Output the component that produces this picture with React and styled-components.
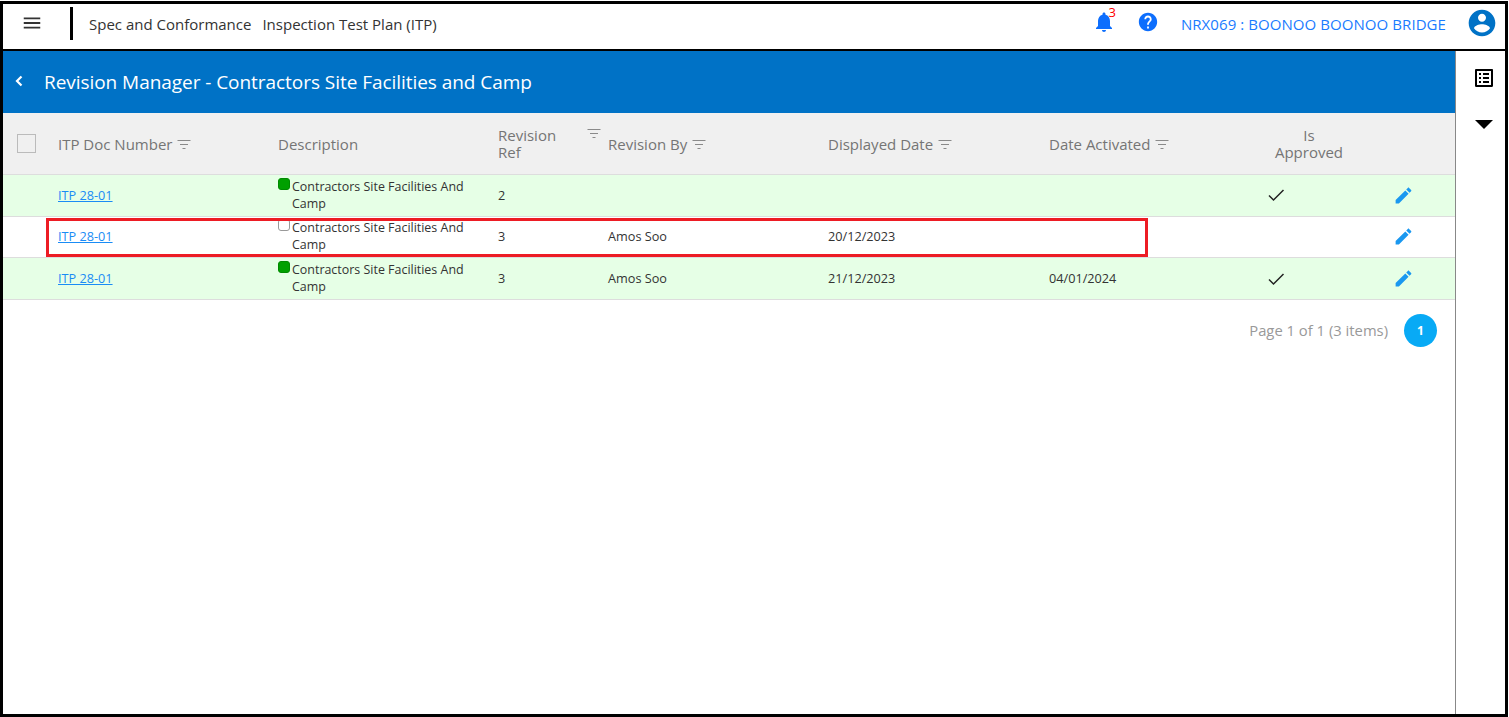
import React from 'react'
import styled, { createGlobalStyle } from 'styled-components'

const GlobalStyle = createGlobalStyle`
  html, body {
    margin: 0;
    padding: 0;
    background: #fff;
  }
  body {
    font-family: "Open Sans", "Noto Sans", sans-serif;
  }
`;

const Frame = styled.div`
  box-sizing: border-box;
  width: 1508px;
  height: 716px;
  margin-top: 1px;
  border: 3px solid #000;
  display: flex;
  flex-direction: column;
  overflow: hidden;
`;

const TopBar = styled.header`
  box-sizing: border-box;
  height: 47px;
  flex: none;
  display: flex;
  align-items: center;
  border-bottom: 2px solid #000;
  padding: 0 0 6px 18px;
`;

const MenuButton = styled.div`
  display: flex;
  width: 23px;
  margin-bottom: 2px;
  color: #333;
`;

const Divider = styled.div`
  width: 3px;
  height: 33px;
  background: #000;
  margin: 0 16px 0 26px;
`;

const Crumb = styled.span`
  font-size: 15px;
  color: #333;
  margin-right: 11px;
  white-space: nowrap;
`;

const TopActions = styled.div`
  margin-left: auto;
  display: flex;
  align-items: center;
  color: #0d6efd;
  padding-right: 7px;
`;

const Bell = styled.div`
  position: relative;
  display: flex;
  margin: 0 21px 3px 0;
`;

const BellCount = styled.span`
  position: absolute;
  top: -5px;
  right: 0;
  font-size: 13px;
  line-height: 14px;
  color: #f00;
`;

const HelpIcon = styled.div`
  display: flex;
  margin: 0 22px 3px 0;
`;

const Project = styled.span`
  font-size: 15px;
  letter-spacing: 0.07px;
  color: #1a7bff;
  margin-right: 20px;
  white-space: nowrap;
`;

const Avatar = styled.div`
  display: flex;
  margin-bottom: 2px;
  color: #0072c6;
`;

const Body = styled.div`
  flex: 1;
  display: flex;
  min-height: 0;
`;

const Main = styled.main`
  flex: 1;
  min-width: 0;
`;

const Banner = styled.div`
  box-sizing: border-box;
  height: 62px;
  margin-left: -2px;
  padding-left: 13px;
  display: flex;
  align-items: center;
  background: #0072c6;
  color: #fff;
`;

const BackIcon = styled.div`
  display: flex;
  width: 30px;
  margin-bottom: 2px;
`;

const BannerTitle = styled.h1`
  margin: 0;
  font-size: 19px;
  font-weight: 400;
  letter-spacing: -0.05px;
`;

const columns = '45px 220px 220px 110px 220px 221px 220px 100px 96px';

const HeadRow = styled.div`
  display: grid;
  grid-template-columns: ${columns};
  box-sizing: border-box;
  height: 62px;
  padding-top: 2px;
  align-items: center;
  background: #f0f0f0;
  border-bottom: 1px solid #ddd;
`;

const HeadCell = styled.div`
  display: flex;
  align-items: center;
  gap: 5px;
  padding-left: 10px;
  font-size: 15px;
  line-height: 17px;
  color: #757575;
  white-space: nowrap;
`;

const TwoLines = styled.span`
  margin: -1px 0 1px;
`;

const CheckCell = styled.div`
  display: flex;
  padding-left: 14px;
  margin-bottom: 2px;
`;

const HeadCheck = styled.div`
  box-sizing: border-box;
  width: 19px;
  height: 19px;
  border: 1px solid #bbb;
`;

const RevisionHead = styled(HeadCell)`
  justify-content: space-between;
  margin-right: -3px;
  align-items: flex-start;
`;

const ApprovedHead = styled(HeadCell)`
  justify-content: center;
  padding-left: 0;
  text-align: center;
`;

const Row = styled.div`
  position: relative;
  display: grid;
  grid-template-columns: ${columns};
  box-sizing: border-box;
  height: 41.67px;
  align-items: center;
  border-bottom: 1px solid #ddd;
  background: ${p => (p.$approved ? '#e6ffe6' : '#fff')};
`;

const Cell = styled.div`
  padding-left: 10px;
  font-size: 12.7px;
  line-height: 17px;
  color: #333;
  white-space: nowrap;
`;

const DocLink = styled.a`
  color: #1a8cf5;
  text-decoration: underline;
`;

const DescriptionCell = styled(Cell)`
  display: flex;
  align-items: flex-start;
  margin-top: -1px;
  font-size: 12.45px;
  white-space: normal;
`;

const StatusDot = styled.span`
  box-sizing: border-box;
  flex: none;
  width: 12px;
  height: 12px;
  margin: 0 2px 0 0;
  border-radius: 3px;
  background: ${p => (p.$on ? '#00a000' : '#fff')};
  border: 1px solid ${p => (p.$on ? '#008a00' : '#999')};
`;

const DescriptionText = styled.span`
  width: 180px;
`;

const CheckMark = styled.div`
  display: flex;
  padding-left: 8px;
  color: #222;
`;

const EditButton = styled.div`
  display: flex;
  justify-content: center;
  padding-right: 8px;
  color: #1a98f0;
`;

// annotation drawn over the screenshot
const Highlight = styled.div`
  position: absolute;
  left: 43px;
  top: 1px;
  width: 1102px;
  height: 39px;
  box-sizing: border-box;
  border: 3px solid #ed1c24;
  pointer-events: none;
`;

const Pager = styled.div`
  display: flex;
  justify-content: flex-end;
  align-items: center;
  gap: 16px;
  padding: 14px 18px 0 0;
`;

const PagerInfo = styled.span`
  font-size: 14.8px;
  color: #999;
`;

const PageButton = styled.div`
  width: 33px;
  height: 33px;
  border-radius: 50%;
  display: flex;
  align-items: center;
  justify-content: center;
  background: #08aaf5;
  color: #fff;
  font-size: 12px;
  font-weight: 700;
`;

const Sidebar = styled.aside`
  flex: none;
  width: 50px;
  box-sizing: border-box;
  border-left: 1px solid #888;
  display: flex;
  flex-direction: column;
  align-items: flex-start;
  padding: 15px 0 0 16px;
  gap: 30px;
`;

const SideIcon = styled.div`
  display: flex;
  color: #000;
`;

const CaretIcon = styled(SideIcon)`
  margin-left: 3px;
`;

const MaterialIcon = ({ d, size = 24 }) => (
  <svg width={size} height={size} viewBox="0 0 24 24" fill="currentColor">
    <path d={d} />
  </svg>
);

const FilterIcon = () => (
  <svg width="14" height="11" viewBox="0 0 14 11" stroke="#8a8a8a" strokeWidth="1" fill="none">
    <path d="M0.5 1.5h13M3 5.5h8M5.5 9.5h3" />
  </svg>
);

const icons = {
  menu: 'M3 18h18v-2H3v2zm0-5h18v-2H3v2zm0-7v2h18V6H3z',
  bell: 'M12 22c1.1 0 2-.9 2-2h-4c0 1.1.89 2 2 2zm6-6v-5c0-3.07-1.64-5.64-4.5-6.32V4c0-.83-.67-1.5-1.5-1.5s-1.5.67-1.5 1.5v.68C7.63 5.36 6 7.92 6 11v5l-2 2v1h16v-1l-2-2z',
  help: 'M12 2C6.48 2 2 6.48 2 12s4.48 10 10 10 10-4.48 10-10S17.52 2 12 2zm1 17h-2v-2h2v2zm2.07-7.75l-.9.92C13.45 12.9 13 13.5 13 15h-2v-.5c0-1.1.45-2.1 1.17-2.83l1.24-1.26c.37-.36.59-.86.59-1.41 0-1.1-.9-2-2-2s-2 .9-2 2H8c0-2.21 1.79-4 4-4s4 1.79 4 4c0 .88-.36 1.68-.93 2.25z',
  account: 'M12 2C6.48 2 2 6.48 2 12s4.48 10 10 10 10-4.48 10-10S17.52 2 12 2zm0 3c1.66 0 3 1.34 3 3s-1.34 3-3 3-3-1.34-3-3 1.34-3 3-3zm0 14.2c-2.5 0-4.71-1.28-6-3.22.03-1.99 4-3.08 6-3.08 1.99 0 5.97 1.09 6 3.08-1.29 1.94-3.5 3.22-6 3.22z',
  edit: 'M3 17.25V21h3.75L17.81 9.94l-3.75-3.75L3 17.25zM20.71 7.04c.39-.39.39-1.02 0-1.41l-2.34-2.34c-.39-.39-1.02-.39-1.41 0l-1.83 1.83 3.75 3.75 1.83-1.83z',
  list: 'M19 5v14H5V5h14m1.1-2H3.9c-.5 0-.9.4-.9.9v16.2c0 .4.4.9.9.9h16.2c.4 0 .9-.5.9-.9V3.9c0-.5-.5-.9-.9-.9zM11 7h6v2h-6V7zm0 4h6v2h-6v-2zm0 4h6v2h-6zM7 7h2v2H7zm0 4h2v2H7zm0 4h2v2H7z',
};

const rows = [
  { ref: '2', by: '', shown: '', activated: '', approved: true },
  { ref: '3', by: 'Amos Soo', shown: '20/12/2023', activated: '', approved: false, marked: true },
  { ref: '3', by: 'Amos Soo', shown: '21/12/2023', activated: '04/01/2024', approved: true },
];

const App = () => {
  return (
    <>
      <GlobalStyle />
      <Frame>
        <TopBar>
          <MenuButton><MaterialIcon d={icons.menu} size={22} /></MenuButton>
          <Divider />
          <Crumb>Spec and Conformance</Crumb>
          <Crumb>Inspection Test Plan (ITP)</Crumb>
          <TopActions>
            <Bell>
              <MaterialIcon d={icons.bell} />
              <BellCount>3</BellCount>
            </Bell>
            <HelpIcon><MaterialIcon d={icons.help} size={22} /></HelpIcon>
            <Project>NRX069 : BOONOO BOONOO BRIDGE</Project>
            <Avatar><MaterialIcon d={icons.account} size={32} /></Avatar>
          </TopActions>
        </TopBar>
        <Body>
          <Main>
            <Banner>
              <BackIcon>
                <svg width="10" height="12" viewBox="0 0 10 12" fill="none" stroke="#fff" strokeWidth="2.2">
                  <path d="M7.5 1.5L3 6l4.5 4.5" />
                </svg>
              </BackIcon>
              <BannerTitle>Revision Manager - Contractors Site Facilities and Camp</BannerTitle>
            </Banner>
            <HeadRow>
              <CheckCell><HeadCheck /></CheckCell>
              <HeadCell>ITP Doc Number <FilterIcon /></HeadCell>
              <HeadCell>Description</HeadCell>
              <RevisionHead>
                <TwoLines>Revision<br />Ref</TwoLines>
                <FilterIcon />
              </RevisionHead>
              <HeadCell>Revision By <FilterIcon /></HeadCell>
              <HeadCell>Displayed Date <FilterIcon /></HeadCell>
              <HeadCell>Date Activated <FilterIcon /></HeadCell>
              <ApprovedHead><TwoLines>Is<br />Approved</TwoLines></ApprovedHead>
              <div />
            </HeadRow>
            {rows.map((row, i) => (
              <Row key={i} $approved={row.approved}>
                <div />
                <Cell><DocLink href="#">ITP 28-01</DocLink></Cell>
                <DescriptionCell>
                  <StatusDot $on={row.approved} />
                  <DescriptionText>Contractors Site Facilities And Camp</DescriptionText>
                </DescriptionCell>
                <Cell>{row.ref}</Cell>
                <Cell>{row.by}</Cell>
                <Cell>{row.shown}</Cell>
                <Cell>{row.activated}</Cell>
                <CheckMark>
                  {row.approved && (
                    <svg width="18" height="16" viewBox="0 0 18 16" fill="none" stroke="currentColor" strokeWidth="1.5">
                      <path d="M2 8.5l4.5 4.5L16.5 3" />
                    </svg>
                  )}
                </CheckMark>
                <EditButton><MaterialIcon d={icons.edit} size={21} /></EditButton>
                {row.marked && <Highlight />}
              </Row>
            ))}
            <Pager>
              <PagerInfo>Page 1 of 1 (3 items)</PagerInfo>
              <PageButton>1</PageButton>
            </Pager>
          </Main>
          <Sidebar>
            <SideIcon><MaterialIcon d={icons.list} /></SideIcon>
            <CaretIcon>
              <svg width="18" height="9" viewBox="0 0 18 9" fill="currentColor">
                <path d="M0 0h18L9 9z" />
              </svg>
            </CaretIcon>
          </Sidebar>
        </Body>
      </Frame>
    </>
  );
};

export default App
